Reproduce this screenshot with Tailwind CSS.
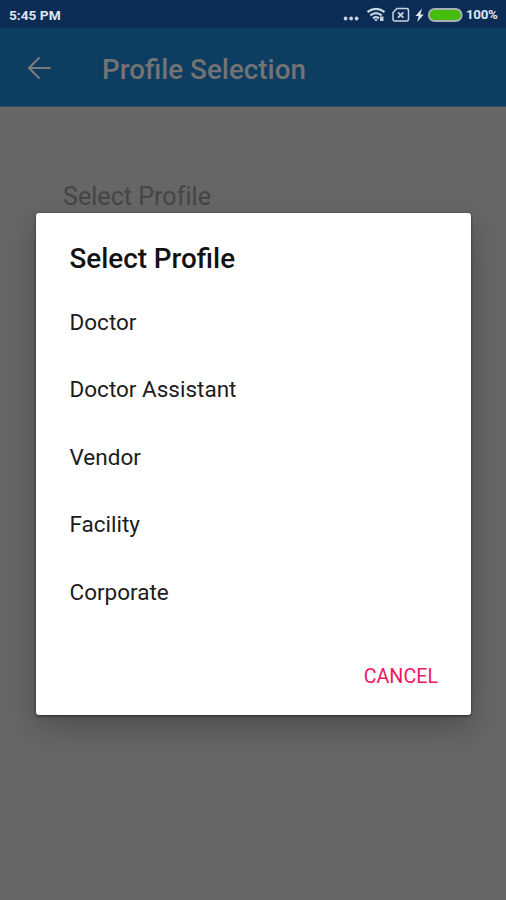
<!DOCTYPE html>
<html lang="en">
<head>
<meta charset="utf-8">
<title>Profile Selection</title>
<script src="https://cdn.jsdelivr.net/npm/@tailwindcss/browser@4"></script>
</head>
<body class="relative h-[900px] w-[506px] overflow-hidden bg-[#666666] font-['Roboto',sans-serif]">
<div class="flex h-7 items-center bg-[#0b2d55] pt-0.5 pl-[9px] text-[13px] font-bold text-[#dfe6f0]">
  <span class="w-[334px] whitespace-nowrap text-[13.7px]">5:45 PM</span>
  <svg class="h-5 w-[122px] shrink-0" viewBox="0 0 122 20" fill="none">
    <g fill="#c9d2df"><circle cx="2.6" cy="13.5" r="1.9"/><circle cx="8.1" cy="13.5" r="1.9"/><circle cx="13.6" cy="13.5" r="1.9"/></g>
    <g stroke="#c9d2df" stroke-width="2.2"><path d="M24.500 7Q33 .8 41.500 7"/><path d="M27.300 10.300Q33 5.800 38.700 10.300"/><path d="M30 13.300Q33 11 36 13.300"/></g>
    <path d="M31 14.200h4L33 16.500zM37 11.500h3.500v4.500H37z" fill="#c9d2df"/>
    <path d="M54 3.500h9.500a2 2 0 0 1 2 2v8.500a2 2 0 0 1-2 2H52a2 2 0 0 1-2-2V7.500z" stroke="#c9d2df" stroke-width="1.500"/>
    <path d="M55 7.300l5.400 5.400m0-5.400L55 12.700" stroke="#c9d2df" stroke-width="1.800"/>
    <path d="M79 3.500l-6.500 7.500h3.200l-1.500 6 6.500-7.500h-3.300z" fill="#dfe6f0"/>
    <rect x="85.700" y="4" width="33" height="12" rx="6" fill="#45bd0b" stroke="#a9b0b5" stroke-width="1.800"/>
  </svg>
  <span class="w-9 pl-[1px] text-[13.300px] tracking-[-0.3px]">100%</span>
</div>
<header class="flex h-[79px] items-center border-b border-[#3a4f66] bg-[#0d3d61] pt-[5px] pl-[27px]">
  <svg class="mb-1 h-6 w-6 shrink-0" viewBox="0 0 24 24" fill="none" stroke="#7a7a7a" stroke-width="2.200"><path d="M23.500 12H2.500M12.500 1.500L2 12l10.500 10.500"/></svg>
  <h1 class="ml-[51px] whitespace-nowrap text-[27.800px] leading-8 font-medium text-[#737373]">Profile Selection</h1>
</header>
<main class="pt-[74px] pl-[63px]"><p class="whitespace-nowrap text-[25px] leading-8 tracking-[0.05px] text-[#454545]">Select Profile</p></main>
<section role="dialog" class="absolute top-[213px] left-[36px] flex h-[502px] w-[435px] flex-col rounded-[3px] bg-white shadow-[0_1px_3px_rgba(0,0,0,.55),0_12px_30px_rgba(0,0,0,.24)]">
  <h2 class="pt-[30px] pl-[33.500px] text-[27.800px] leading-8 font-medium whitespace-nowrap text-[#121212]">Select Profile</h2>
  <ul class="mt-[14px] pl-[33.500px] text-[22.500px] text-[#1c1c1c]">
    <li class="flex h-[67.500px] items-center">Doctor</li>
    <li class="flex h-[67.500px] items-center">Doctor Assistant</li>
    <li class="flex h-[67.500px] items-center">Vendor</li>
    <li class="flex h-[67.500px] items-center">Facility</li>
    <li class="flex h-[67.500px] items-center">Corporate</li>
  </ul>
  <button class="mt-auto mr-[33px] mb-[26px] self-end text-[19.700px] leading-6 text-[#ed1764]">CANCEL</button>
</section>
</body>
</html>
